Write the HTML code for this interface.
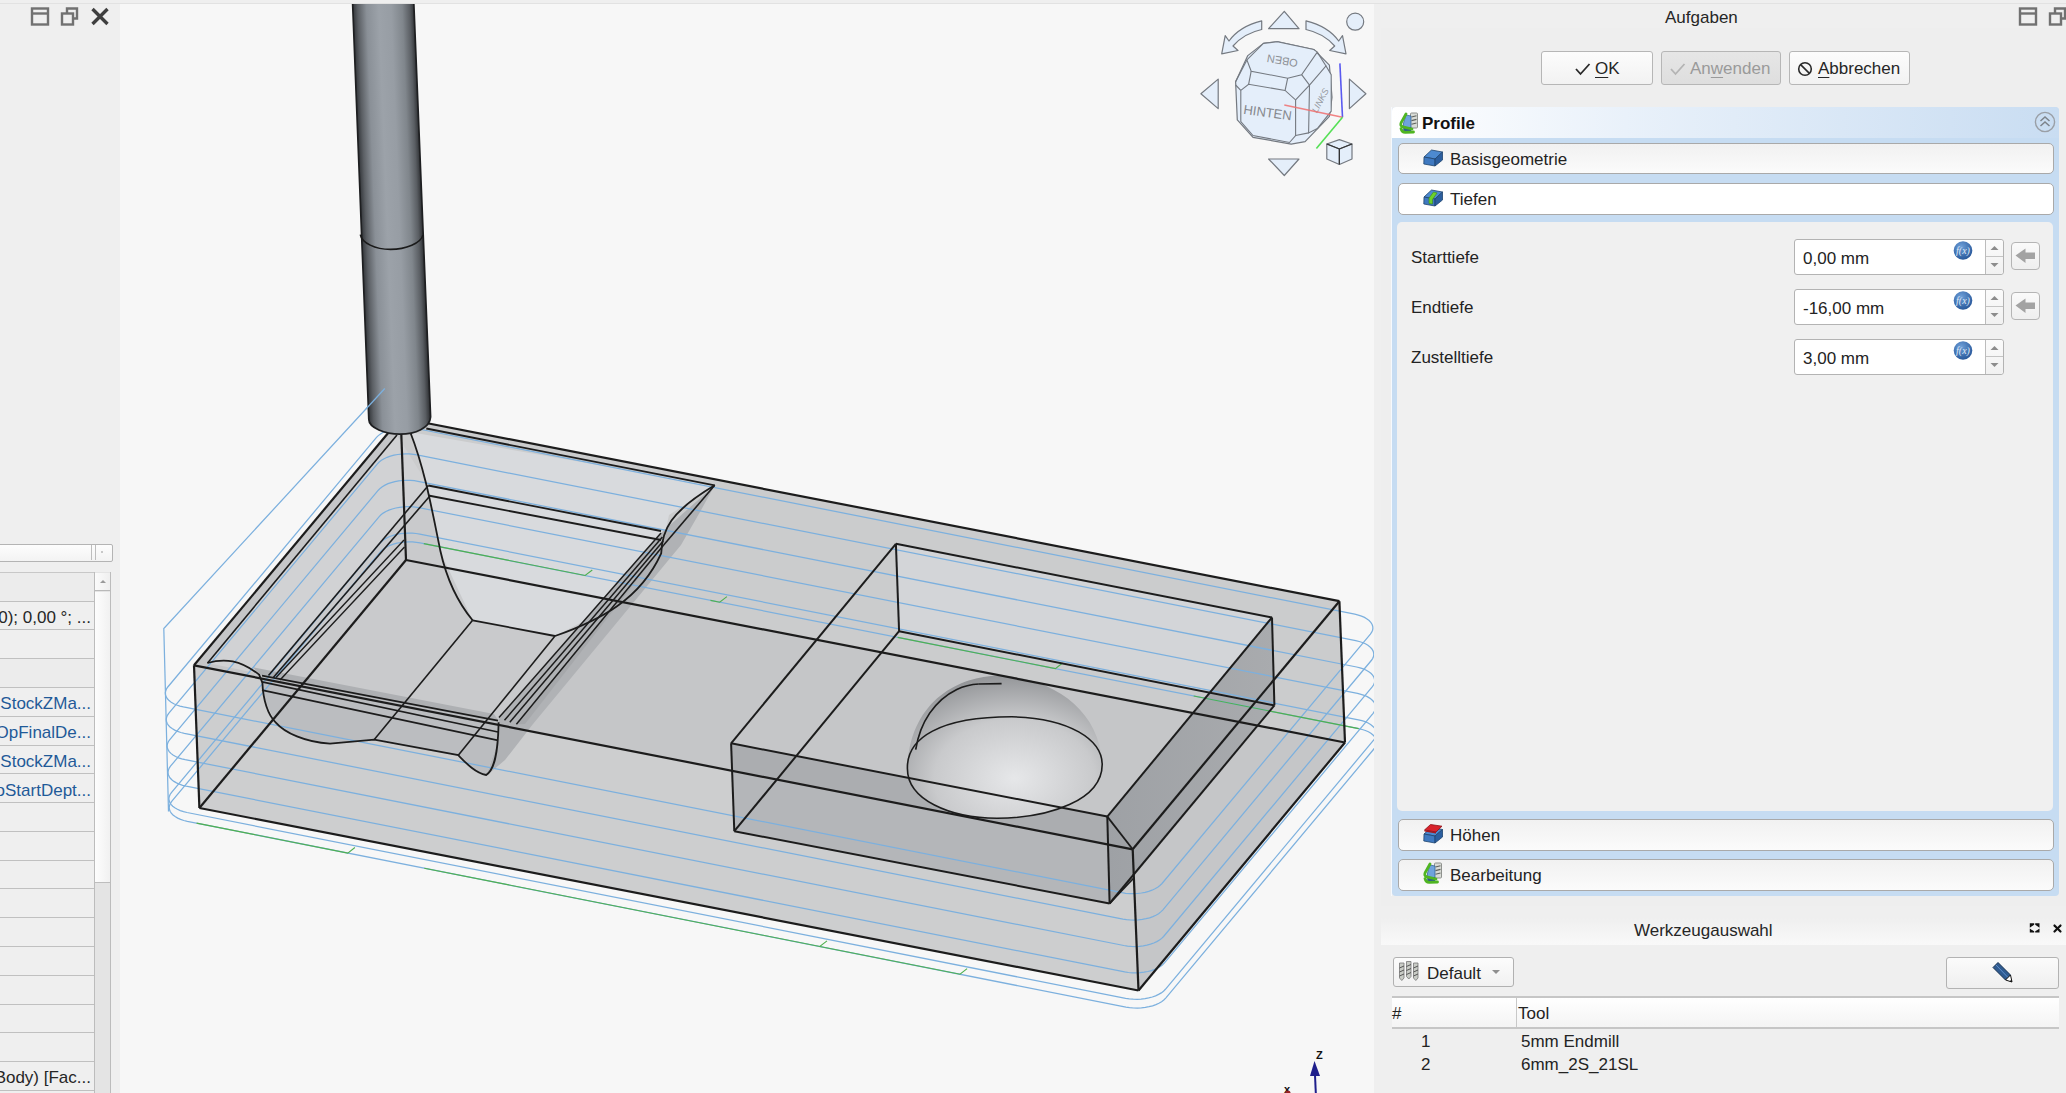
<!DOCTYPE html>
<html><head><meta charset="utf-8"><style>
html,body{margin:0;padding:0;width:2066px;height:1093px;overflow:hidden;background:#efefef;font-family:"Liberation Sans",sans-serif}
u{text-decoration-thickness:1px}
</style></head><body>

<svg style="position:absolute;left:0;top:0" width="2066" height="1093" viewBox="0 0 2066 1093">
<defs><linearGradient id="tool" gradientUnits="userSpaceOnUse" x1="352.5" y1="0" x2="414.3" y2="0" gradientTransform="skewX(2.228)"><stop offset="0" stop-color="#33363a"/><stop offset="0.08" stop-color="#5b5f64"/><stop offset="0.22" stop-color="#8a9097"/><stop offset="0.42" stop-color="#9ca2a9"/><stop offset="0.62" stop-color="#979da4"/><stop offset="0.8" stop-color="#80868c"/><stop offset="0.92" stop-color="#5a5e63"/><stop offset="1" stop-color="#2c2e31"/></linearGradient><radialGradient id="dome" cx="0.55" cy="0.72" r="0.75"><stop offset="0" stop-color="#e6e7e9"/><stop offset="0.55" stop-color="#c9cacc"/><stop offset="1" stop-color="#8f9194"/></radialGradient><linearGradient id="rwall" x1="0" y1="0" x2="1" y2="0"><stop offset="0" stop-color="#9ea1a5"/><stop offset="1" stop-color="#a9abae"/></linearGradient></defs>
<rect x="120" y="4" width="1254" height="1089" fill="#f7f7f7"/>
<polygon points="194.0,665.3 400.7,418.0 1339.4,601.2 1345.0,742.5 1138.5,990.5 199.4,808.0" fill="#c5c6c8"/>
<polygon points="194.0,665.3 1132.7,849.3 1138.5,990.5 199.4,808.0" fill="#cdcecf"/>
<polygon points="400.7,418.0 1339.4,601.2 1345.0,742.5 406.0,560.0" fill="#cbcccd"/>
<polygon points="207.6,663.0 397.0,435.0 428.3,485.5 268.5,675.5" fill="#d1d2d4"/>
<polygon points="268.5,675.5 428.3,485.5 661.0,533.0 499.0,717.6" fill="#c9cacc"/>
<polygon points="410.0,432.0 714.7,485.3 669.0,515.0 661.0,553.0 631.0,597.0 555.0,636.0 472.6,620.3 440.0,551.0 428.0,486.0" fill="#d8dadd"/>
<polygon points="661.0,533.0 714.7,485.3 700.0,512.0 681.0,545.0 533.0,724.0 505.0,760.0 486.0,776.0 497.8,742.0 499.0,717.6" fill="#b0b2b5"/>
<polygon points="663.7,545.0 672.0,535.0 525.0,724.0 516.4,724.2" fill="#a6a8ab"/>
<polygon points="262.0,676.0 498.6,721.0 497.8,742.0 486.2,775.0 473.1,770.0 458.3,755.2 374.3,739.6 330.0,743.7 297.0,737.1 275.6,722.3 263.2,697.6" fill="#bbbdc0"/>
<polygon points="252.0,667.0 494.0,714.0 498.6,721.0 262.0,676.0" fill="#aeb0b3"/>
<polygon points="895.9,543.8 1272.0,617.5 1274.4,705.4 899.1,631.2" fill="#d3d5d8"/>
<polygon points="731.1,743.3 1107.3,816.6 1109.6,903.5 734.3,831.2" fill="#b4b6b9"/>
<polygon points="731.1,743.3 1107.3,816.6 1108.5,844.6 732.5,770.9" fill="#abadb0"/>
<polygon points="1272.0,617.5 1107.3,816.6 1109.6,903.5 1274.4,705.4" fill="url(#rwall)"/>
<path d="M907.4,768 C910,700 960,676 998,675.7 C1045,676 1100,705 1102.2,764.4 C1100,800 1050,818 997,818.3 C950,818 906,800 907.4,768 Z" fill="url(#dome)"/>
<polyline points="1122.0,892.7 1125.7,893.3 1129.6,893.6 1133.5,893.7 1137.5,893.5 1141.4,893.0 1145.1,892.3 1148.7,891.4 1152.0,890.2 1155.0,888.8 1157.7,887.3 1159.9,885.5 1161.8,883.7 1370.4,634.1 1371.7,632.2 1372.6,630.2 1372.9,628.2 1372.7,626.2 1372.0,624.2 1370.8,622.3 1369.1,620.5 1367.0,618.9 1364.5,617.4 1361.5,616.1 1358.3,615.1 1354.8,614.2 416.2,428.5 412.5,427.9 408.6,427.5 404.7,427.5 400.8,427.6 396.9,428.1 393.1,428.8 389.5,429.8 386.2,430.9 383.2,432.3 380.5,433.9 378.3,435.6 376.5,437.4 167.8,687.0 166.5,688.9 165.7,690.9 165.3,692.9 165.5,694.9 166.2,696.9 167.4,698.8 169.1,700.6 171.2,702.2 173.8,703.7 176.7,705.0 179.9,706.1 183.4,706.9 1122.0,892.7" fill="none" stroke="#7cb0de" stroke-width="1.25"/>
<polyline points="1122.9,919.1 1126.6,919.7 1130.5,920.0 1134.4,920.1 1138.4,919.9 1142.3,919.4 1146.0,918.7 1149.6,917.8 1152.9,916.6 1155.9,915.2 1158.6,913.7 1160.8,911.9 1162.7,910.1 1371.3,660.5 1372.6,658.6 1373.5,656.6 1373.8,654.6 1373.6,652.6 1372.9,650.6 1371.7,648.7 1370.0,646.9 1367.9,645.3 1365.4,643.8 1362.4,642.5 1359.2,641.5 1355.7,640.6 417.1,454.9 413.4,454.3 409.5,453.9 405.6,453.9 401.7,454.1 397.8,454.5 394.0,455.2 390.4,456.2 387.1,457.3 384.1,458.7 381.4,460.3 379.2,462.0 377.4,463.8 168.7,713.4 167.4,715.3 166.6,717.3 166.2,719.3 166.4,721.3 167.1,723.3 168.3,725.2 170.0,727.0 172.1,728.6 174.7,730.1 177.6,731.4 180.8,732.5 184.3,733.3 1122.9,919.1" fill="none" stroke="#7cb0de" stroke-width="1.25"/>
<polyline points="1123.8,945.5 1127.5,946.1 1131.4,946.4 1135.3,946.5 1139.3,946.3 1143.2,945.8 1146.9,945.1 1150.5,944.2 1153.8,943.0 1156.8,941.6 1159.5,940.1 1161.7,938.4 1163.6,936.5 1372.2,686.9 1373.5,685.0 1374.4,683.0 1374.7,681.0 1374.5,679.0 1373.8,677.0 1372.6,675.1 1370.9,673.3 1368.8,671.7 1366.3,670.2 1363.3,668.9 1360.1,667.9 1356.6,667.0 418.0,481.3 414.3,480.7 410.4,480.3 406.5,480.3 402.6,480.5 398.7,480.9 394.9,481.6 391.3,482.6 388.0,483.7 385.0,485.1 382.3,486.7 380.1,488.4 378.3,490.2 169.6,739.8 168.3,741.7 167.5,743.7 167.1,745.7 167.3,747.7 168.0,749.7 169.2,751.6 170.9,753.4 173.0,755.0 175.6,756.5 178.5,757.8 181.7,758.9 185.2,759.7 1123.8,945.5" fill="none" stroke="#7cb0de" stroke-width="1.25"/>
<polyline points="1124.7,971.9 1128.4,972.5 1132.3,972.8 1136.2,972.9 1140.2,972.7 1144.1,972.2 1147.8,971.5 1151.4,970.6 1154.7,969.4 1157.7,968.0 1160.4,966.5 1162.6,964.8 1164.5,962.9 1373.1,713.3 1374.4,711.4 1375.3,709.4 1375.6,707.4 1375.4,705.4 1374.7,703.4 1373.5,701.5 1371.8,699.7 1369.7,698.1 1367.2,696.6 1364.2,695.3 1361.0,694.3 1357.5,693.4 418.9,507.7 415.2,507.1 411.3,506.7 407.4,506.7 403.5,506.9 399.6,507.3 395.8,508.0 392.2,509.0 388.9,510.1 385.9,511.5 383.2,513.1 381.0,514.8 379.2,516.6 170.5,766.2 169.2,768.1 168.4,770.1 168.0,772.1 168.2,774.1 168.9,776.1 170.1,778.0 171.8,779.8 173.9,781.4 176.5,782.9 179.4,784.2 182.6,785.3 186.1,786.1 1124.7,971.9" fill="none" stroke="#7cb0de" stroke-width="1.25"/>
<polyline points="1125.6,998.3 1129.3,998.9 1133.2,999.2 1137.1,999.3 1141.1,999.1 1145.0,998.6 1148.7,997.9 1152.3,997.0 1155.6,995.8 1158.6,994.4 1161.3,992.9 1163.5,991.2 1165.4,989.3 1374.0,739.7 1375.3,737.8 1376.2,735.8 1376.5,733.8 1376.3,731.8 1375.6,729.8 1374.4,727.9 1372.7,726.2 1370.6,724.5 1368.1,723.0 1365.1,721.7 1361.9,720.7 1358.4,719.8 419.8,534.1 416.1,533.5 412.2,533.1 408.3,533.1 404.4,533.3 400.5,533.7 396.7,534.4 393.1,535.4 389.8,536.5 386.8,537.9 384.1,539.5 381.9,541.2 380.1,543.0 171.4,792.6 170.1,794.5 169.3,796.5 168.9,798.5 169.1,800.5 169.8,802.5 171.0,804.4 172.7,806.2 174.8,807.8 177.4,809.3 180.3,810.6 183.5,811.7 187.0,812.5 1125.6,998.3" fill="none" stroke="#7cb0de" stroke-width="1.25"/>
<polyline points="1125.9,1007.1 1129.6,1007.7 1133.5,1008.0 1137.4,1008.1 1141.4,1007.9 1145.3,1007.4 1149.0,1006.7 1152.6,1005.8 1155.9,1004.6 1158.9,1003.2 1161.6,1001.7 1163.8,1000.0 1165.7,998.1 1374.3,748.5 1375.6,746.6 1376.5,744.6 1376.8,742.6 1376.6,740.6 1375.9,738.6 1374.7,736.7 1373.0,735.0 1370.9,733.3 1368.4,731.8 1365.4,730.5 1362.2,729.5 1358.7,728.6 420.1,542.9 416.4,542.3 412.5,541.9 408.6,541.9 404.7,542.1 400.8,542.5 397.0,543.2 393.4,544.2 390.1,545.3 387.1,546.7 384.4,548.3 382.2,550.0 380.4,551.8 171.7,801.4 170.4,803.3 169.6,805.3 169.2,807.3 169.4,809.3 170.1,811.3 171.3,813.2 173.0,815.0 175.1,816.6 177.7,818.1 180.6,819.4 183.8,820.5 187.3,821.3 1125.9,1007.1" fill="none" stroke="#7cb0de" stroke-width="1.25"/>
<polyline points="384.8,388.5 163.8,628.5 168.5,811.5" fill="none" stroke="#7cb0de" stroke-width="1.25"/>
<polyline points="196.6,823.1 347.8,853.1 354.9,847.5" fill="none" stroke="#4fb04f" stroke-width="1.1"/>
<polyline points="424.3,868.2 819.8,946.5 827.0,940.9" fill="none" stroke="#4fb04f" stroke-width="1.1"/>
<polyline points="819.8,946.5 960.0,974.2 967.1,968.6" fill="none" stroke="#4fb04f" stroke-width="1.1"/>
<polyline points="423.8,543.6 585.1,575.5 592.3,570.0" fill="none" stroke="#4fb04f" stroke-width="1.1"/>
<polyline points="897.7,637.4 1055.4,668.6 1062.5,663.0" fill="none" stroke="#4fb04f" stroke-width="1.1"/>
<polyline points="1193.7,696.0 1358.7,728.6" fill="none" stroke="#4fb04f" stroke-width="1.1"/>
<polyline points="710.5,600.4 719.7,602.2 726.9,596.6" fill="none" stroke="#4fb04f" stroke-width="1.1"/>
<line x1="194.0" y1="665.3" x2="400.7" y2="418.0" stroke="#1c1c1c" stroke-width="2.2"/>
<line x1="400.7" y1="418.0" x2="1339.4" y2="601.2" stroke="#1c1c1c" stroke-width="2.2"/>
<line x1="1339.4" y1="601.2" x2="1132.7" y2="849.3" stroke="#1c1c1c" stroke-width="2.2"/>
<line x1="1132.7" y1="849.3" x2="194.0" y2="665.3" stroke="#1c1c1c" stroke-width="2.2"/>
<line x1="194.0" y1="665.3" x2="199.4" y2="808.0" stroke="#1c1c1c" stroke-width="2.2"/>
<line x1="199.4" y1="808.0" x2="1138.5" y2="990.5" stroke="#1c1c1c" stroke-width="2.2"/>
<line x1="1138.5" y1="990.5" x2="1345.0" y2="742.5" stroke="#1c1c1c" stroke-width="2.2"/>
<line x1="1345.0" y1="742.5" x2="1339.4" y2="601.2" stroke="#1c1c1c" stroke-width="2.2"/>
<line x1="1132.7" y1="849.3" x2="1138.5" y2="990.5" stroke="#1c1c1c" stroke-width="2.2"/>
<line x1="400.7" y1="418.0" x2="406.0" y2="560.0" stroke="#1c1c1c" stroke-width="2.2"/>
<line x1="406.0" y1="560.0" x2="1345.0" y2="742.5" stroke="#1c1c1c" stroke-width="2.2"/>
<line x1="406.0" y1="560.0" x2="199.4" y2="808.0" stroke="#1c1c1c" stroke-width="2.2"/>
<line x1="207.6" y1="662.9" x2="397.0" y2="435.1" stroke="#1c1c1c" stroke-width="1.6"/>
<line x1="426.3" y1="428.5" x2="714.7" y2="485.3" stroke="#1c1c1c" stroke-width="1.8"/>
<line x1="428.3" y1="486.0" x2="714.7" y2="485.3" stroke="#1c1c1c" stroke-width="0"/>
<line x1="428.3" y1="485.5" x2="661.0" y2="531.0" stroke="#1c1c1c" stroke-width="1.8"/>
<line x1="428.3" y1="495.5" x2="661.0" y2="540.0" stroke="#1c1c1c" stroke-width="1.8"/>
<line x1="428.3" y1="485.5" x2="268.5" y2="675.5" stroke="#1c1c1c" stroke-width="1.6"/>
<line x1="429.0" y1="497.0" x2="273.3" y2="677.5" stroke="#1c1c1c" stroke-width="1.6"/>
<line x1="404.0" y1="540.0" x2="276.0" y2="677.5" stroke="#1c1c1c" stroke-width="1.4"/>
<line x1="404.5" y1="547.0" x2="280.0" y2="680.0" stroke="#1c1c1c" stroke-width="1.4"/>
<line x1="714.7" y1="485.3" x2="663.7" y2="545.0" stroke="#1c1c1c" stroke-width="1.6"/>
<line x1="661.0" y1="533.0" x2="499.0" y2="717.6" stroke="#1c1c1c" stroke-width="1.5"/>
<line x1="662.4" y1="537.0" x2="504.5" y2="720.2" stroke="#1c1c1c" stroke-width="1.5"/>
<line x1="663.2" y1="541.0" x2="509.8" y2="722.3" stroke="#1c1c1c" stroke-width="1.5"/>
<line x1="663.7" y1="545.0" x2="516.4" y2="724.2" stroke="#1c1c1c" stroke-width="1.5"/>
<line x1="262.0" y1="675.6" x2="498.0" y2="720.6" stroke="#1c1c1c" stroke-width="1.6"/>
<line x1="262.0" y1="681.9" x2="498.0" y2="732.0" stroke="#1c1c1c" stroke-width="1.6"/>
<line x1="262.0" y1="690.1" x2="498.0" y2="740.4" stroke="#1c1c1c" stroke-width="1.6"/>
<path d="M410.2,432 C425,470 432,510 440.4,551 C448,585 460,605 472.6,620.3" fill="none" stroke="#1c1c1c" stroke-width="1.8"/>
<polyline points="472.6,620.3 555.0,636.0" fill="none" stroke="#1c1c1c" stroke-width="1.8"/>
<path d="M555,636 C600,620 640,600 661.2,553.3 C662,530 670,512 714.7,485.3" fill="none" stroke="#1c1c1c" stroke-width="1.8"/>
<path d="M207.3,663 C225,658 240,660 259.1,674.6 L262.4,682.8 C263,700 268,715 275.6,722.3 C285,733 305,742 330,743.7 L374.3,739.6 L458.3,755.2 C465,762 475,773 486.2,775 C494,770 498,755 498.6,722.3" fill="none" stroke="#1c1c1c" stroke-width="1.8"/>
<line x1="472.6" y1="620.3" x2="374.3" y2="739.6" stroke="#1c1c1c" stroke-width="1.6"/>
<line x1="555.0" y1="636.0" x2="458.3" y2="755.2" stroke="#1c1c1c" stroke-width="1.6"/>
<line x1="895.9" y1="543.8" x2="1272.0" y2="617.5" stroke="#1c1c1c" stroke-width="2.0"/>
<line x1="1272.0" y1="617.5" x2="1107.3" y2="816.6" stroke="#1c1c1c" stroke-width="2.0"/>
<line x1="1107.3" y1="816.6" x2="731.1" y2="743.3" stroke="#1c1c1c" stroke-width="2.0"/>
<line x1="731.1" y1="743.3" x2="895.9" y2="543.8" stroke="#1c1c1c" stroke-width="2.0"/>
<line x1="895.9" y1="543.8" x2="899.1" y2="631.2" stroke="#1c1c1c" stroke-width="2.0"/>
<line x1="1272.0" y1="617.5" x2="1274.4" y2="705.4" stroke="#1c1c1c" stroke-width="2.0"/>
<line x1="1107.3" y1="816.6" x2="1109.6" y2="903.5" stroke="#1c1c1c" stroke-width="2.0"/>
<line x1="731.1" y1="743.3" x2="734.3" y2="831.2" stroke="#1c1c1c" stroke-width="2.0"/>
<line x1="899.1" y1="631.2" x2="1274.4" y2="705.4" stroke="#1c1c1c" stroke-width="2.0"/>
<line x1="1274.4" y1="705.4" x2="1109.6" y2="903.5" stroke="#1c1c1c" stroke-width="2.0"/>
<line x1="1109.6" y1="903.5" x2="734.3" y2="831.2" stroke="#1c1c1c" stroke-width="2.0"/>
<line x1="734.3" y1="831.2" x2="899.1" y2="631.2" stroke="#1c1c1c" stroke-width="2.0"/>
<line x1="1107.3" y1="816.6" x2="1132.7" y2="849.3" stroke="#1c1c1c" stroke-width="1.8"/>
<line x1="1109.6" y1="903.5" x2="1133.3" y2="878.5" stroke="#1c1c1c" stroke-width="1.8"/>
<path d="M907.4,768 C907,738 940,716.8 1011.7,716.8 C1070,718 1102,740 1102.2,764.4 C1102,800 1050,818 997,818.3 C950,818 907,800 907.4,768 Z" fill="none" stroke="#1c1c1c" stroke-width="1.6"/>
<path d="M915.7,749.7 C920,722 935,700 956.8,689.4 C964,686 970,684.5 978.8,684" fill="none" stroke="#1c1c1c" stroke-width="1.7"/>
<line x1="978.8" y1="684.0" x2="1001.6" y2="683.6" stroke="#1c1c1c" stroke-width="1.7"/>
<path d="M352.6,3 L413.8,3 L430.6,417 C430,428 415,434 400,434.2 C385,434 369,428 368.8,419.4 Z" fill="url(#tool)"/>
<path d="M352.6,3 L368.8,419.4 C369,428 385,434 400,434.2 C415,434 430,428 430.6,417 L413.8,3" fill="none" stroke="#1e1f21" stroke-width="1.7"/>
<path d="M360.3,234.6 C362,243 375,249.4 390.5,249.4 C406,249.4 421,243 422.9,235.1" fill="none" stroke="#1a1a1a" stroke-width="1.6"/>
<line x1="384.8" y1="388.5" x2="366" y2="409" stroke="#7cb0de" stroke-width="1.25"/>
</svg>
<svg style="position:absolute;left:0;top:0" width="1400" height="200" viewBox="0 0 1400 200">
<polygon points="1268.6,28.7 1284.3,11.3 1299,28.7" fill="#e4eefa" stroke="#747980" stroke-width="1.2" stroke-linejoin="round"/>
<polygon points="1268.6,159 1299,159 1284.3,175.5" fill="#e4eefa" stroke="#747980" stroke-width="1.2" stroke-linejoin="round"/>
<polygon points="1218.2,79.1 1200.9,93.8 1218.2,108.6" fill="#e4eefa" stroke="#747980" stroke-width="1.2" stroke-linejoin="round"/>
<polygon points="1349.4,79.1 1365.9,93.8 1349.4,108.6" fill="#e4eefa" stroke="#747980" stroke-width="1.2" stroke-linejoin="round"/>
<circle cx="1355.2" cy="21.7" r="8.5" fill="#e4eefa" stroke="#747980" stroke-width="1.2" stroke-linejoin="round"/>
<path d="M1261.7,20.9 L1261.7,29.5 C1250,32 1240,38 1233,46 L1238,50.5 L1221.7,53.9 L1225.2,35.6 L1229,41 C1237,30 1249,24 1261.7,20.9 Z" fill="#e4eefa" stroke="#747980" stroke-width="1.2" stroke-linejoin="round"/>
<path d="M1306,20.9 L1306,29.5 C1317.7,32 1327.7,38 1334.7,46 L1329.7,50.5 L1346,53.9 L1342.5,35.6 L1338.7,41 C1330.7,30 1318.7,24 1306,20.9 Z" fill="#e4eefa" stroke="#747980" stroke-width="1.2" stroke-linejoin="round"/>
<polygon points="1263.4,43.4 1277.3,41.7 1313.8,49.5 1329.4,65.2 1332,97.3 1329.4,116.4 1305.1,141.6 1291.2,144.2 1253,137.3 1237.3,119.9 1235.6,81.7 1247.8,55.6" fill="#e4eefa" stroke="#747980" stroke-width="1.2" stroke-linejoin="round"/>
<polygon points="1263.4,43.4 1277.3,41.7 1313.8,49.5 1317.3,52.1 1301.6,74.7 1287.7,78.2 1251.2,71.2 1246.9,59.9" fill="#e4eefa" stroke="#747980" stroke-width="1.1"/>
<polygon points="1240.8,90.4 1248.6,84.3 1285.1,90.4 1295.6,99.9 1295.6,135.5 1289.5,142.5 1253,135.5 1240.8,121.6" fill="#e4eefa" stroke="#747980" stroke-width="1.1"/>
<polygon points="1309.5,85.1 1326,66 1331.2,74.7 1331.2,111.2 1317.3,128.6 1308.6,132.9" fill="#e4eefa" stroke="#747980" stroke-width="1.1"/>
<g stroke="#747980" stroke-width="1.1" fill="none"><line x1="1251.2" y1="71.2" x2="1248.6" y2="84.3"/><line x1="1287.7" y1="78.2" x2="1285.1" y2="90.4"/><line x1="1301.6" y1="74.7" x2="1309.5" y2="85.1"/><line x1="1295.6" y1="99.9" x2="1309.5" y2="85.1"/><line x1="1295.6" y1="135.5" x2="1308.6" y2="132.9"/><line x1="1317.3" y1="52.1" x2="1326" y2="66"/><line x1="1246.9" y1="59.9" x2="1235.6" y2="81.7"/><line x1="1240.8" y1="90.4" x2="1235.6" y2="85"/></g>
<text x="0" y="0" transform="translate(1283,57) rotate(190)" font-family="Liberation Sans" font-size="11" fill="#8e9196" text-anchor="middle">OBEN</text>
<text x="0" y="0" transform="translate(1267,117) rotate(8)" font-family="Liberation Sans" font-size="13" fill="#85888d" text-anchor="middle">HINTEN</text>
<text x="0" y="0" transform="translate(1323,102) rotate(-62)" font-family="Liberation Sans" font-size="9" font-style="italic" fill="#95989d" text-anchor="middle">LINKS</text>
<line x1="1339.9" y1="63.4" x2="1342.5" y2="117.3" stroke="#5a5af0" stroke-width="1.6"/>
<line x1="1342.5" y1="117.3" x2="1284.3" y2="105.1" stroke="#f07070" stroke-width="1.5" opacity="0.85"/>
<line x1="1342.5" y1="117.3" x2="1316.4" y2="148.6" stroke="#55e055" stroke-width="1.6"/>
<g fill="#e4eefa" stroke="#747980" stroke-width="1.2" stroke-linejoin="round"><polygon points="1326.8,144 1339.4,139.6 1352,144 1339.4,149"/><polygon points="1326.8,144 1339.4,149 1339.4,164.5 1326.8,159"/><polygon points="1339.4,149 1352,144 1352,159 1339.4,164.5"/></g>
<line x1="1339.4" y1="149" x2="1339.4" y2="164.5" stroke="#333" stroke-width="1.2"/>
<polyline points="1326.8,144 1339.4,149 1352,144" fill="none" stroke="#333" stroke-width="1.1"/>
</svg>
<svg style="position:absolute;left:1270px;top:1040px" width="70" height="53">
<text x="46" y="19" font-family="Liberation Sans" font-weight="bold" font-size="11" fill="#111">Z</text>
<polygon points="44.5,21 40,36 50,36" fill="#1f1f8c"/>
<line x1="45" y1="35" x2="45.8" y2="53" stroke="#1f1f8c" stroke-width="2"/>
<text x="14" y="53" font-family="Liberation Sans" font-weight="bold" font-size="11" fill="#111">x</text>
<circle cx="18" cy="53" r="2.5" fill="#9a2020"/>
</svg>
<div style="position:absolute;left:0;top:0;width:120px;height:1093px;background:#efefef"></div>
<svg style="position:absolute;left:0;top:0" width="120" height="40">
<rect x="32" y="8.5" width="16" height="16" fill="none" stroke="#717171" stroke-width="2.4"/>
<line x1="32" y1="13.5" x2="48" y2="13.5" stroke="#717171" stroke-width="2.4"/>
<rect x="62" y="13.5" width="11" height="11" fill="none" stroke="#717171" stroke-width="2.4"/>
<polyline points="67,13 67,8.5 77,8.5 77,18.5 73,18.5" fill="none" stroke="#717171" stroke-width="2.4"/>
<line x1="92.5" y1="9" x2="107.5" y2="24" stroke="#3f3f3f" stroke-width="3.4"/>
<line x1="107.5" y1="9" x2="92.5" y2="24" stroke="#3f3f3f" stroke-width="3.4"/>
</svg>
<div style="position:absolute;left:-4px;top:544px;width:115px;height:16px;border:1px solid #b4b4b4;border-radius:2px;background:linear-gradient(#fdfdfd,#f3f3f3)"></div>
<div style="position:absolute;left:91px;top:545px;width:1px;height:15px;background:#bdbdbd"></div>
<div style="position:absolute;left:95px;top:545px;width:1px;height:15px;background:#bdbdbd"></div>
<div style="position:absolute;left:101px;top:551px;width:2px;height:2px;background:#c8c8c8"></div>
<div style="position:absolute;left:0;top:572.8px;width:94px;height:28.8px;background:#ececec"></div>
<div style="position:absolute;left:0;top:600.6px;width:94px;height:1.4px;background:#c0c0c0"></div>
<div style="position:absolute;left:0;top:601.6px;width:94px;height:28.8px;background:#efefef"></div>
<div style="position:absolute;left:0;top:629.4px;width:94px;height:1.4px;background:#c0c0c0"></div>
<div style="position:absolute;right:1975px;top:607.9px;font-size:17px;line-height:20px;color:#262626;white-space:nowrap;text-align:right">0); 0,00 °; ...</div>
<div style="position:absolute;left:0;top:630.4px;width:94px;height:28.8px;background:#efefef"></div>
<div style="position:absolute;left:0;top:658.1px;width:94px;height:1.4px;background:#c0c0c0"></div>
<div style="position:absolute;left:0;top:659.1px;width:94px;height:28.8px;background:#ececec"></div>
<div style="position:absolute;left:0;top:686.9px;width:94px;height:1.4px;background:#c0c0c0"></div>
<div style="position:absolute;left:0;top:687.9px;width:94px;height:28.8px;background:#efefef"></div>
<div style="position:absolute;left:0;top:715.7px;width:94px;height:1.4px;background:#c0c0c0"></div>
<div style="position:absolute;right:1975px;top:694.2px;font-size:17px;line-height:20px;color:#1f5a98;white-space:nowrap;text-align:right">oStockZMa...</div>
<div style="position:absolute;left:0;top:716.7px;width:94px;height:28.8px;background:#efefef"></div>
<div style="position:absolute;left:0;top:744.5px;width:94px;height:1.4px;background:#c0c0c0"></div>
<div style="position:absolute;right:1975px;top:723.0px;font-size:17px;line-height:20px;color:#1f5a98;white-space:nowrap;text-align:right">OpFinalDe...</div>
<div style="position:absolute;left:0;top:745.5px;width:94px;height:28.8px;background:#efefef"></div>
<div style="position:absolute;left:0;top:773.3px;width:94px;height:1.4px;background:#c0c0c0"></div>
<div style="position:absolute;right:1975px;top:751.8px;font-size:17px;line-height:20px;color:#1f5a98;white-space:nowrap;text-align:right">oStockZMa...</div>
<div style="position:absolute;left:0;top:774.3px;width:94px;height:28.8px;background:#efefef"></div>
<div style="position:absolute;left:0;top:802.0px;width:94px;height:1.4px;background:#c0c0c0"></div>
<div style="position:absolute;right:1975px;top:780.6px;font-size:17px;line-height:20px;color:#1f5a98;white-space:nowrap;text-align:right">oStartDept...</div>
<div style="position:absolute;left:0;top:803.0px;width:94px;height:28.8px;background:#efefef"></div>
<div style="position:absolute;left:0;top:830.8px;width:94px;height:1.4px;background:#c0c0c0"></div>
<div style="position:absolute;left:0;top:831.8px;width:94px;height:28.8px;background:#efefef"></div>
<div style="position:absolute;left:0;top:859.6px;width:94px;height:1.4px;background:#c0c0c0"></div>
<div style="position:absolute;left:0;top:860.6px;width:94px;height:28.8px;background:#efefef"></div>
<div style="position:absolute;left:0;top:888.4px;width:94px;height:1.4px;background:#c0c0c0"></div>
<div style="position:absolute;left:0;top:889.4px;width:94px;height:28.8px;background:#efefef"></div>
<div style="position:absolute;left:0;top:917.2px;width:94px;height:1.4px;background:#c0c0c0"></div>
<div style="position:absolute;left:0;top:918.2px;width:94px;height:28.8px;background:#efefef"></div>
<div style="position:absolute;left:0;top:945.9px;width:94px;height:1.4px;background:#c0c0c0"></div>
<div style="position:absolute;left:0;top:946.9px;width:94px;height:28.8px;background:#efefef"></div>
<div style="position:absolute;left:0;top:974.7px;width:94px;height:1.4px;background:#c0c0c0"></div>
<div style="position:absolute;left:0;top:975.7px;width:94px;height:28.8px;background:#efefef"></div>
<div style="position:absolute;left:0;top:1003.5px;width:94px;height:1.4px;background:#c0c0c0"></div>
<div style="position:absolute;left:0;top:1004.5px;width:94px;height:28.8px;background:#efefef"></div>
<div style="position:absolute;left:0;top:1032.3px;width:94px;height:1.4px;background:#c0c0c0"></div>
<div style="position:absolute;left:0;top:1033.3px;width:94px;height:28.8px;background:#efefef"></div>
<div style="position:absolute;left:0;top:1061.1px;width:94px;height:1.4px;background:#c0c0c0"></div>
<div style="position:absolute;left:0;top:1062.1px;width:94px;height:28.8px;background:#efefef"></div>
<div style="position:absolute;left:0;top:1089.8px;width:94px;height:1.4px;background:#c0c0c0"></div>
<div style="position:absolute;right:1975px;top:1068.4px;font-size:17px;line-height:20px;color:#262626;white-space:nowrap;text-align:right">Body) [Fac...</div>
<div style="position:absolute;left:0;top:572px;width:111px;height:1px;background:#c8c8c8"></div>
<div style="position:absolute;left:94px;top:572px;width:17px;height:521px;background:#e4e4e4;border-left:1px solid #bcbcbc;border-right:1px solid #bcbcbc;box-sizing:border-box"></div>
<div style="position:absolute;left:95px;top:573px;width:15px;height:18px;background:linear-gradient(90deg,#fbfbfb,#efefef);border-bottom:1px solid #b9b9b9;box-sizing:border-box"></div>
<div style="position:absolute;left:100px;top:580px;width:0;height:0;border-left:3px solid transparent;border-right:3px solid transparent;border-bottom:3px solid #9a9a9a"></div>
<div style="position:absolute;left:95px;top:592px;width:15px;height:291px;background:linear-gradient(90deg,#fdfdfd,#f1f1f1);border-bottom:1px solid #bdbdbd;box-sizing:border-box"></div>
<div style="position:absolute;left:1374px;top:0;width:692px;height:1093px;background:#efefef"></div>
<div style="position:absolute;left:1381px;top:28px;width:685px;height:878px;background:#eeeeee"></div>
<div style="position:absolute;left:1665px;top:8px;font-size:17px;line-height:20px;color:#262626">Aufgaben</div>
<svg style="position:absolute;left:2000px;top:0" width="66" height="40">
<rect x="20" y="8.5" width="16" height="16" fill="none" stroke="#717171" stroke-width="2.4"/>
<line x1="20" y1="13.5" x2="36" y2="13.5" stroke="#717171" stroke-width="2.4"/>
<rect x="50" y="13.5" width="11" height="11" fill="none" stroke="#717171" stroke-width="2.4"/>
<polyline points="55,13 55,8.5 65,8.5 65,18.5 61,18.5" fill="none" stroke="#717171" stroke-width="2.4"/>
</svg>
<div style="position:absolute;left:1541px;top:51px;width:112px;height:34px;box-sizing:border-box;border:1px solid #b6b6b6;border-radius:3px;background:linear-gradient(#fcfcfc,#f2f2f2)"><svg style="position:absolute;left:33px;top:10px" width="16" height="14"><polyline points="1,7 5.5,12 14.5,2" fill="none" stroke="#2a2a2a" stroke-width="1.8"/></svg><div style="position:absolute;left:53px;top:7px;font-size:17px;line-height:20px;color:#262626"><u style="text-underline-offset:3px">O</u>K</div></div>
<div style="position:absolute;left:1661px;top:51px;width:120px;height:34px;box-sizing:border-box;border:1px solid #b6b6b6;border-radius:3px;background:linear-gradient(#e6e6e6,#dedede)"><svg style="position:absolute;left:8px;top:10px" width="16" height="14"><polyline points="1,7 5.5,12 14.5,2" fill="none" stroke="#b4b4b4" stroke-width="1.8"/></svg><div style="position:absolute;left:28px;top:7px;font-size:17px;line-height:20px;color:#9a9a9a">An<u style="text-underline-offset:3px">w</u>enden</div></div>
<div style="position:absolute;left:1789px;top:51px;width:121px;height:34px;box-sizing:border-box;border:1px solid #b6b6b6;border-radius:3px;background:linear-gradient(#fcfcfc,#f2f2f2)"><svg style="position:absolute;left:7px;top:9px" width="16" height="16"><circle cx="8" cy="8" r="6.3" fill="none" stroke="#2a2a2a" stroke-width="1.6"/><line x1="3.6" y1="3.6" x2="12.4" y2="12.4" stroke="#2a2a2a" stroke-width="1.6"/></svg><div style="position:absolute;left:28px;top:7px;font-size:17px;line-height:20px;color:#262626"><u style="text-underline-offset:3px">A</u>bbrechen</div></div>
<div style="position:absolute;left:1391px;top:107px;width:1px;height:789px;background:#f6f9fd"></div>
<div style="position:absolute;left:1392px;top:107px;width:667px;height:789px;background:#c6dcf2;border-radius:4px"></div>
<div style="position:absolute;left:1392px;top:107px;width:667px;height:31px;border-radius:4px 4px 0 0;background:linear-gradient(90deg,#ffffff 0%,#e9f1fa 35%,#c9ddf2 100%)"></div>
<div style="position:absolute;left:1422px;top:114px;font-size:17px;line-height:20px;font-weight:bold;color:#111">Profile</div>
<svg style="position:absolute;left:1398px;top:111px" width="22" height="24" viewBox="0 0 22 24">
<rect x="12.5" y="2" width="7" height="15" rx="1" fill="#d8dbd6" stroke="#8f928e" stroke-width="1"/>
<line x1="13.5" y1="6" x2="18.5" y2="4.8" stroke="#5f625e" stroke-width="1.1"/>
<line x1="13.5" y1="9.6" x2="18.5" y2="8.4" stroke="#5f625e" stroke-width="1.1"/>
<line x1="13.5" y1="13.2" x2="18.5" y2="12" stroke="#5f625e" stroke-width="1.1"/>
<polygon points="8,4 13,5 13,20 5.5,20 5.5,12" fill="#6fa3dc" stroke="#2d5d90" stroke-width="0.7"/>
<rect x="6" y="16" width="7" height="5" fill="#2f5d8a"/>
<path d="M8,3 L3.2,11.5 Q1.8,15 4.8,15.8 L14,18" fill="none" stroke="#4fb522" stroke-width="2.8" stroke-linecap="round"/>
<path d="M3,17.5 Q3.8,21.5 7.5,21.3 L15.5,21" fill="none" stroke="#4fb522" stroke-width="2.8" stroke-linecap="round"/>
</svg>
<svg style="position:absolute;left:2034px;top:111px" width="22" height="22"><circle cx="11" cy="11" r="9.6" fill="none" stroke="#9a9fa6" stroke-width="1.4"/><polyline points="6.5,10 11,6 15.5,10" fill="none" stroke="#7d838a" stroke-width="1.5"/><polyline points="6.5,15 11,11 15.5,15" fill="none" stroke="#7d838a" stroke-width="1.5"/></svg>
<div style="position:absolute;left:1398px;top:143px;width:656px;height:31px;box-sizing:border-box;border:1px solid #a9a9a9;border-radius:5px;background:linear-gradient(#f1f1f1,#fbfbfb)"></div><div style="position:absolute;left:1450px;top:150px;font-size:17px;line-height:20px;color:#232323">Basisgeometrie</div><svg style="position:absolute;left:1423px;top:149px" width="22" height="20" viewBox="0 0 22 20">
<polygon points="1,8 8.5,1 19.5,3 12,10" fill="#4d8ad0" stroke="#20456f" stroke-width="0.8"/>
<polygon points="1,8 12,10 12,17 0.8,15" fill="#3f79c0" stroke="#20456f" stroke-width="0.8"/>
<polygon points="12,10 19.5,3 19.5,11 12,17" fill="#2b5e9f" stroke="#20456f" stroke-width="0.8"/>
</svg>
<div style="position:absolute;left:1398px;top:183px;width:656px;height:32px;box-sizing:border-box;border:1px solid #a9a9a9;border-radius:5px;background:#ffffff"></div><div style="position:absolute;left:1450px;top:190px;font-size:17px;line-height:20px;color:#232323">Tiefen</div><svg style="position:absolute;left:1423px;top:189px" width="22" height="20" viewBox="0 0 22 20">
<polygon points="1,8 8.5,1 19.5,3 12,10" fill="#4d8ad0" stroke="#20456f" stroke-width="0.8"/>
<polygon points="1,8 12,10 12,17 0.8,15" fill="#3f79c0" stroke="#20456f" stroke-width="0.8"/>
<polygon points="12,10 19.5,3 19.5,11 12,17" fill="#2b5e9f" stroke="#20456f" stroke-width="0.8"/><polygon points="6,9 10.5,3 14,4 9.5,10.5 9.5,15 6,14.5" fill="#6cd12a" stroke="#3d8a15" stroke-width="0.6"/>
</svg>
<div style="position:absolute;left:1397px;top:222px;width:656px;height:589px;background:#f0f0f0;border-radius:5px"></div>
<div style="position:absolute;left:1411px;top:248px;font-size:17px;line-height:20px;color:#232323">Starttiefe</div>
<div style="position:absolute;left:1794px;top:239px;width:210px;height:36px;box-sizing:border-box;border:1px solid #b3b3b3;border-radius:3px;background:#fff"></div>
<div style="position:absolute;left:1985px;top:240px;width:18px;height:34px;box-sizing:border-box;border-left:1px solid #bcbcbc;background:linear-gradient(#fbfbfb,#f1f1f1);border-radius:0 3px 3px 0"></div>
<div style="position:absolute;left:1986px;top:256px;width:17px;height:1px;background:#c4c4c4"></div>
<svg style="position:absolute;left:1986px;top:239px" width="18" height="36"><polygon points="4.5,11 8.5,7 12.5,11" fill="#8c8c8c"/><polygon points="4.5,24 8.5,28 12.5,24" fill="#8c8c8c"/></svg>
<div style="position:absolute;left:1803px;top:249px;font-size:17px;line-height:20px;color:#232323">0,00 mm</div>
<svg style="position:absolute;left:1952px;top:240px" width="22" height="22"><defs><radialGradient id="fx239" cx="0.4" cy="0.3" r="0.8"><stop offset="0" stop-color="#6e9fd8"/><stop offset="1" stop-color="#1f4f93"/></radialGradient></defs><circle cx="11" cy="10.5" r="9.3" fill="url(#fx239)"/><text x="11" y="14" font-family="Liberation Serif" font-style="italic" font-size="10" fill="#dfe9f7" text-anchor="middle">f(x)</text></svg>
<div style="position:absolute;left:2011px;top:242px;width:29px;height:28px;box-sizing:border-box;border:1px solid #b5b5b5;border-radius:4px;background:linear-gradient(#fafafa,#efefef)"></div>
<svg style="position:absolute;left:2011px;top:242px" width="29" height="28"><polygon points="4.5,13.5 14.5,6.5 14.5,10.5 24,10.5 24,17 14.5,17 14.5,21" fill="#a3a3a3"/></svg>
<div style="position:absolute;left:1411px;top:298px;font-size:17px;line-height:20px;color:#232323">Endtiefe</div>
<div style="position:absolute;left:1794px;top:289px;width:210px;height:36px;box-sizing:border-box;border:1px solid #b3b3b3;border-radius:3px;background:#fff"></div>
<div style="position:absolute;left:1985px;top:290px;width:18px;height:34px;box-sizing:border-box;border-left:1px solid #bcbcbc;background:linear-gradient(#fbfbfb,#f1f1f1);border-radius:0 3px 3px 0"></div>
<div style="position:absolute;left:1986px;top:306px;width:17px;height:1px;background:#c4c4c4"></div>
<svg style="position:absolute;left:1986px;top:289px" width="18" height="36"><polygon points="4.5,11 8.5,7 12.5,11" fill="#8c8c8c"/><polygon points="4.5,24 8.5,28 12.5,24" fill="#8c8c8c"/></svg>
<div style="position:absolute;left:1803px;top:299px;font-size:17px;line-height:20px;color:#232323">-16,00 mm</div>
<svg style="position:absolute;left:1952px;top:290px" width="22" height="22"><defs><radialGradient id="fx289" cx="0.4" cy="0.3" r="0.8"><stop offset="0" stop-color="#6e9fd8"/><stop offset="1" stop-color="#1f4f93"/></radialGradient></defs><circle cx="11" cy="10.5" r="9.3" fill="url(#fx289)"/><text x="11" y="14" font-family="Liberation Serif" font-style="italic" font-size="10" fill="#dfe9f7" text-anchor="middle">f(x)</text></svg>
<div style="position:absolute;left:2011px;top:292px;width:29px;height:28px;box-sizing:border-box;border:1px solid #b5b5b5;border-radius:4px;background:linear-gradient(#fafafa,#efefef)"></div>
<svg style="position:absolute;left:2011px;top:292px" width="29" height="28"><polygon points="4.5,13.5 14.5,6.5 14.5,10.5 24,10.5 24,17 14.5,17 14.5,21" fill="#a3a3a3"/></svg>
<div style="position:absolute;left:1411px;top:348px;font-size:17px;line-height:20px;color:#232323">Zustelltiefe</div>
<div style="position:absolute;left:1794px;top:339px;width:210px;height:36px;box-sizing:border-box;border:1px solid #b3b3b3;border-radius:3px;background:#fff"></div>
<div style="position:absolute;left:1985px;top:340px;width:18px;height:34px;box-sizing:border-box;border-left:1px solid #bcbcbc;background:linear-gradient(#fbfbfb,#f1f1f1);border-radius:0 3px 3px 0"></div>
<div style="position:absolute;left:1986px;top:356px;width:17px;height:1px;background:#c4c4c4"></div>
<svg style="position:absolute;left:1986px;top:339px" width="18" height="36"><polygon points="4.5,11 8.5,7 12.5,11" fill="#8c8c8c"/><polygon points="4.5,24 8.5,28 12.5,24" fill="#8c8c8c"/></svg>
<div style="position:absolute;left:1803px;top:349px;font-size:17px;line-height:20px;color:#232323">3,00 mm</div>
<svg style="position:absolute;left:1952px;top:340px" width="22" height="22"><defs><radialGradient id="fx339" cx="0.4" cy="0.3" r="0.8"><stop offset="0" stop-color="#6e9fd8"/><stop offset="1" stop-color="#1f4f93"/></radialGradient></defs><circle cx="11" cy="10.5" r="9.3" fill="url(#fx339)"/><text x="11" y="14" font-family="Liberation Serif" font-style="italic" font-size="10" fill="#dfe9f7" text-anchor="middle">f(x)</text></svg>
<div style="position:absolute;left:1398px;top:819px;width:656px;height:32px;box-sizing:border-box;border:1px solid #a9a9a9;border-radius:5px;background:linear-gradient(#f1f1f1,#fbfbfb)"></div><div style="position:absolute;left:1450px;top:826px;font-size:17px;line-height:20px;color:#232323">Höhen</div><svg style="position:absolute;left:1423px;top:823px" width="22" height="22" viewBox="0 0 22 22">
<polygon points="1,11 8.5,4.5 19.5,6.5 12,13" fill="#4d8ad0" stroke="#20456f" stroke-width="0.8"/>
<polygon points="1,11 12,13 12,20 0.8,18" fill="#3f79c0" stroke="#20456f" stroke-width="0.8"/>
<polygon points="12,13 19.5,6.5 19.5,14 12,20" fill="#2b5e9f" stroke="#20456f" stroke-width="0.8"/>
<polygon points="1.5,7 7.5,1.5 19,3.2 13,9" fill="#d8232c" stroke="#8c1015" stroke-width="0.8"/>
<polygon points="1.5,7 13,9 13,10.5 1.5,8.5" fill="#a5161d"/>
</svg>
<div style="position:absolute;left:1398px;top:859px;width:656px;height:32px;box-sizing:border-box;border:1px solid #a9a9a9;border-radius:5px;background:linear-gradient(#f1f1f1,#fbfbfb)"></div><div style="position:absolute;left:1450px;top:866px;font-size:17px;line-height:20px;color:#232323">Bearbeitung</div><svg style="position:absolute;left:1422px;top:861px" width="22" height="24" viewBox="0 0 22 24">
<rect x="12.5" y="2" width="7" height="15" rx="1" fill="#d8dbd6" stroke="#8f928e" stroke-width="1"/>
<line x1="13.5" y1="6" x2="18.5" y2="4.8" stroke="#5f625e" stroke-width="1.1"/>
<line x1="13.5" y1="9.6" x2="18.5" y2="8.4" stroke="#5f625e" stroke-width="1.1"/>
<line x1="13.5" y1="13.2" x2="18.5" y2="12" stroke="#5f625e" stroke-width="1.1"/>
<polygon points="8,4 13,5 13,20 5.5,20 5.5,12" fill="#6fa3dc" stroke="#2d5d90" stroke-width="0.7"/>
<rect x="6" y="16" width="7" height="5" fill="#2f5d8a"/>
<path d="M8,3 L3.2,11.5 Q1.8,15 4.8,15.8 L14,18" fill="none" stroke="#4fb522" stroke-width="2.8" stroke-linecap="round"/>
<path d="M3,17.5 Q3.8,21.5 7.5,21.3 L15.5,21" fill="none" stroke="#4fb522" stroke-width="2.8" stroke-linecap="round"/>
</svg>
<div style="position:absolute;left:1381px;top:918px;width:685px;height:27px;background:linear-gradient(#efefef,#f9f9f9)"></div>
<div style="position:absolute;left:1634px;top:921px;font-size:17px;line-height:20px;color:#262626">Werkzeugauswahl</div>
<svg style="position:absolute;left:2025px;top:920px" width="41" height="16"><g fill="#111"><polygon points="4.8,3.3 9.2,3.3 9.2,4.8 6.5,6.5 4.8,7.8"/><polygon points="10.2,3.3 14.5,3.3 14.5,7.8 12.8,6.5 10.2,4.8"/><polygon points="4.8,8.5 6.5,9.8 9.2,11.2 9.2,12.6 4.8,12.6"/><polygon points="14.5,8.5 14.5,12.6 10.2,12.6 10.2,11.2 12.8,9.8"/></g><line x1="29.5" y1="5.5" x2="35.5" y2="11.5" stroke="#111" stroke-width="2.2" stroke-linecap="round"/><line x1="35.5" y1="5.5" x2="29.5" y2="11.5" stroke="#111" stroke-width="2.2" stroke-linecap="round"/></svg>
<div style="position:absolute;left:1393px;top:957px;width:121px;height:30px;box-sizing:border-box;border:1px solid #b1b1b1;border-radius:3px;background:linear-gradient(#fcfcfc,#f1f1f1)"></div>
<svg style="position:absolute;left:1398px;top:961px" width="22" height="22"><g fill="#c9ccc6" stroke="#777" stroke-width="0.8"><path d="M1.5,2 h4.5 v15 l-2.2,2.5 l-2.3,-2.5 z"/><path d="M8.5,0.5 h4.5 v15 l-2.2,2.5 l-2.3,-2.5 z"/><path d="M15.5,2 h4.5 v15 l-2.2,2.5 l-2.3,-2.5 z"/></g><g stroke="#555" stroke-width="1"><line x1="1.5" y1="7" x2="6" y2="5"/><line x1="1.5" y1="11" x2="6" y2="9"/><line x1="1.5" y1="15" x2="6" y2="13"/><line x1="8.5" y1="5.5" x2="13" y2="3.5"/><line x1="8.5" y1="9.5" x2="13" y2="7.5"/><line x1="8.5" y1="13.5" x2="13" y2="11.5"/><line x1="15.5" y1="7" x2="20" y2="5"/><line x1="15.5" y1="11" x2="20" y2="9"/><line x1="15.5" y1="15" x2="20" y2="13"/></g></svg>
<div style="position:absolute;left:1427px;top:964px;font-size:17px;line-height:20px;color:#232323">Default</div>
<svg style="position:absolute;left:1490px;top:968px" width="12" height="8"><polygon points="2,2 10,2 6,6" fill="#8f8f8f"/></svg>
<div style="position:absolute;left:1946px;top:957px;width:113px;height:32px;box-sizing:border-box;border:1px solid #b3b3b3;border-radius:3px;background:linear-gradient(#fbfbfb,#efefef)"></div>
<svg style="position:absolute;left:1990px;top:959px" width="26" height="26"><polygon points="3,8.5 8,3.5 20.5,16 15.5,21" fill="#2f5b90" stroke="#16304f" stroke-width="1"/><line x1="6" y1="6" x2="18" y2="18.5" stroke="#5f8fcc" stroke-width="1"/><polygon points="15.5,21 20.5,16 22,23" fill="#fff" stroke="#111" stroke-width="1"/><polygon points="19.5,22.5 22,23 21.5,20.5" fill="#111"/></svg>
<div style="position:absolute;left:1392px;top:996px;width:667px;height:33px;box-sizing:border-box;border-top:2px solid #c6c6c6;border-bottom:2px solid #c6c6c6;background:linear-gradient(#ffffff,#f4f4f4)"></div>
<div style="position:absolute;left:1516px;top:998px;width:1px;height:29px;background:#c8c8c8"></div>
<div style="position:absolute;left:1392px;top:1004px;font-size:17px;line-height:20px;color:#232323">#</div>
<div style="position:absolute;left:1518px;top:1004px;font-size:17px;line-height:20px;color:#232323">Tool</div>
<div style="position:absolute;left:1421px;top:1032px;font-size:17px;line-height:20px;color:#232323">1</div>
<div style="position:absolute;left:1521px;top:1032px;font-size:17px;line-height:20px;color:#232323">5mm Endmill</div>
<div style="position:absolute;left:1421px;top:1055px;font-size:17px;line-height:20px;color:#232323">2</div>
<div style="position:absolute;left:1521px;top:1055px;font-size:17px;line-height:20px;color:#232323">6mm_2S_21SL</div>
<div style="position:absolute;left:0;top:3px;width:2066px;height:1px;background:#e2e2e2"></div>
</body></html>
